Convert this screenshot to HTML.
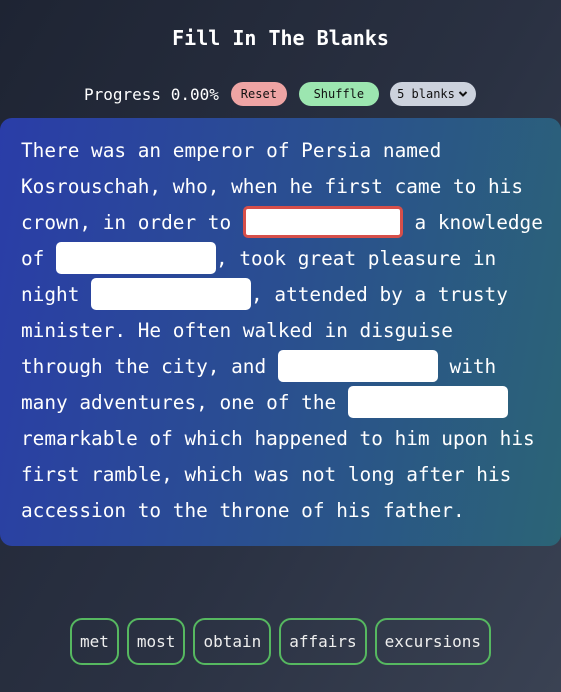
<!DOCTYPE html>
<html><head><meta charset="utf-8"><style>
html,body{margin:0;padding:0}
body{width:561px;height:692px;overflow:hidden;background:linear-gradient(120deg,#1e2433 0%,#2a3142 55%,#3a4253 100%);font-family:"DejaVu Sans Mono","Liberation Mono",monospace;color:#fff;position:relative}
h1{position:absolute;top:26px;left:0;width:561px;text-align:center;margin:0;font-size:20px;font-weight:bold;line-height:24px}
.ctrl{position:absolute;top:82px;left:84px;height:24px;display:flex;align-items:center;font-size:16px}
.btn{height:24px;border-radius:12px;color:#111;font-size:12px;display:flex;align-items:center;justify-content:center}
.card{position:absolute;left:0;top:118px;width:561px;height:428px;border-radius:12px;background:linear-gradient(100deg,#2a3da8 0%,#2a4f90 50%,#2b6476 100%)}
.txt{position:absolute;left:21px;top:133px;font-size:19.4px;line-height:36px;white-space:nowrap}
.b{display:inline-block;width:160px;height:32px;background:#fff;border-radius:5px;vertical-align:middle;box-sizing:border-box;position:relative;top:-2px}
.b.r{border:3px solid #d64f4a}
.chips{position:absolute;top:618px;left:70px;display:flex;gap:8px}
.chip{height:47px;box-sizing:border-box;border:2px solid #56b860;border-radius:12px;padding:0 8px;display:flex;align-items:center;font-size:16px;color:#eee}
</style></head><body>
<h1>Fill In The Blanks</h1>
<div class="ctrl"><span>Progress 0.00%</span>
<div class="btn" style="background:#eea4a4;width:56px;margin-left:12px">Reset</div>
<div class="btn" style="background:#9ce6b0;width:80px;margin-left:12px">Shuffle</div>
<div class="btn" style="background:#ccd2dd;width:86px;margin-left:11px;justify-content:flex-start">&nbsp;5 blanks <svg width="10" height="8" viewBox="0 0 10 8" style="margin-left:3px"><path d="M1.5 2 L5 5.5 L8.5 2" fill="none" stroke="#111" stroke-width="2"/></svg></div>
</div>
<div class="card"></div>
<div class="txt">There was an emperor of Persia named<br>Kosrouschah, who, when he first came to his<br>crown, in order to <span class="b r"></span> a knowledge<br>of <span class="b"></span>, took great pleasure in<br>night <span class="b"></span>, attended by a trusty<br>minister. He often walked in disguise<br>through the city, and <span class="b"></span> with<br>many adventures, one of the <span class="b"></span><br>remarkable of which happened to him upon his<br>first ramble, which was not long after his<br>accession to the throne of his father.</div>
<div class="chips"><div class="chip">met</div><div class="chip">most</div><div class="chip">obtain</div><div class="chip">affairs</div><div class="chip">excursions</div></div>
</body></html>
